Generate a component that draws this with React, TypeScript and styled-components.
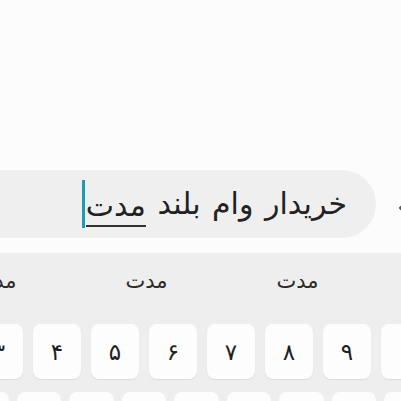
import styled, { createGlobalStyle } from "styled-components";

const GlobalStyle = createGlobalStyle`
  html, body {
    margin: 0;
    padding: 0;
    background: #fcfcfc;
    overflow: hidden;
  }
  #root {
    width: 401px;
    height: 401px;
    overflow: hidden;
  }
`;

const Screen = styled.div`
  width: 401px;
  height: 401px;
  display: flex;
  flex-direction: column;
  overflow: hidden;
  font-family: "DejaVu Sans", "Liberation Sans", sans-serif;
  color: #222;
`;

const TopSpace = styled.div`
  height: 170px;
  flex: none;
  background: #fcfcfc;
`;

const InputRow = styled.div`
  height: 68px;
  flex: none;
  display: flex;
  align-items: center;
`;

const Pill = styled.div`
  flex: none;
  width: 416px;
  height: 68px;
  margin-left: -40px;
  border-radius: 34px;
  background: #efefef;
  display: flex;
  align-items: center;
  justify-content: flex-start;
  direction: rtl;
  padding-right: 29px;
  box-sizing: border-box;
`;

const Query = styled.div`
  font-size: 30px;
  line-height: 48px;
  white-space: nowrap;
  display: flex;
  align-items: center;
  word-spacing: 2px;
`;

const Composing = styled.span`
  border-bottom: 2px solid #333;
  line-height: 38px;
  margin-top: 6px;
`;

const Caret = styled.span`
  display: inline-block;
  width: 2.5px;
  height: 48px;
  background: #1d9cb2;
  margin-right: 1px;
`;

const BackIcon = styled.svg`
  flex: none;
  margin-left: 21px;
  margin-top: 8px;
`;

const Keyboard = styled.div`
  margin-top: 15px;
  flex: 1;
  background: #eeeeee;
  display: flex;
  flex-direction: column;
  overflow: hidden;
`;

const Suggestions = styled.div`
  height: 60px;
  flex: none;
  display: flex;
  direction: rtl;
  padding-right: 28px;
  align-items: center;
`;

const Suggestion = styled.div`
  flex: none;
  width: 151px;
  text-align: center;
  font-size: 21px;
  color: #2a2a2a;
  margin-top: -4px;
`;

const KeyRow = styled.div<{ $offset: number; $gap: number; $top: number }>`
  flex: none;
  display: flex;
  gap: ${(p) => p.$gap}px;
  margin-left: ${(p) => p.$offset}px;
  margin-top: ${(p) => p.$top}px;
`;

const Key = styled.div<{ $w: number }>`
  flex: none;
  width: ${(p) => p.$w}px;
  height: 55px;
  border-radius: 8px;
  background: #fdfdfd;
  box-shadow: 0 1px 1px rgba(0, 0, 0, 0.08);
  display: flex;
  align-items: center;
  justify-content: center;
  font-size: 23px;
  color: #1e1e1e;
`;

const digits = ["۱", "۲", "۳", "۴", "۵", "۶", "۷", "۸", "۹", "۰"];
const letterKeys = Array.from({ length: 9 }, (_, i) => i);

export default function App() {
  return (
    <>
      <GlobalStyle />
      <Screen>
        <TopSpace />
        <InputRow>
          <Pill>
            <Query>
              <span>خریدار وام بلند&nbsp;</span>
              <Composing>مدت</Composing>
              <Caret />
            </Query>
          </Pill>
          <BackIcon width="14" height="16" viewBox="0 0 14 16">
            <path d="M9 2 L3 8 L9 14" fill="none" stroke="#555" strokeWidth="2" strokeLinecap="round" strokeLinejoin="round" />
          </BackIcon>
        </InputRow>
        <Keyboard>
          <Suggestions>
            <Suggestion>مدت</Suggestion>
            <Suggestion>مدت</Suggestion>
            <Suggestion>مدت</Suggestion>
          </Suggestions>
          <KeyRow $offset={-141} $gap={10} $top={11}>
            {digits.map((d) => (
              <Key key={d} $w={48}>{d}</Key>
            ))}
          </KeyRow>
          <KeyRow $offset={-36} $gap={8} $top={13}>
            {letterKeys.map((k) => (
              <Key key={k} $w={44.5} />
            ))}
          </KeyRow>
        </Keyboard>
      </Screen>
    </>
  );
}
